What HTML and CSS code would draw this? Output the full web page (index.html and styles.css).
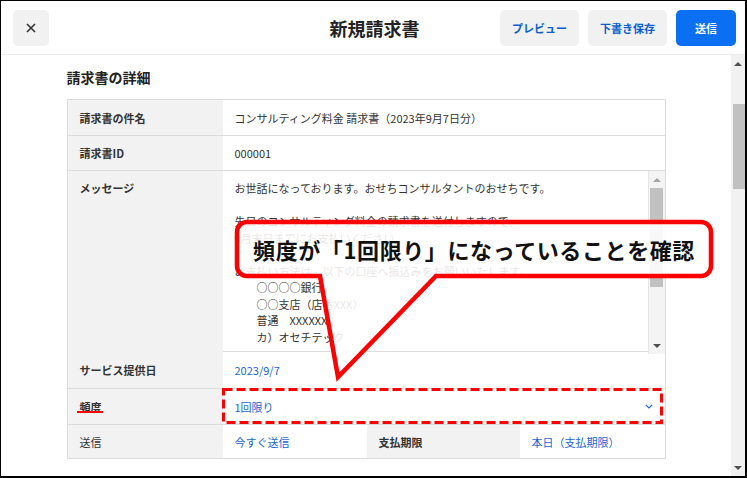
FILE: index.html
```html
<!DOCTYPE html>
<html lang="ja">
<head>
<meta charset="utf-8">
<title>新規請求書</title>
<link rel="stylesheet" href="styles.css">
</head>
<body>
<div class="frame">
  <header class="topbar">
    <div class="left">
      <button class="close" aria-label="閉じる">
        <svg width="10" height="10" viewBox="0 0 10 10"><path d="M1 1 L9 9 M9 1 L1 9" stroke="#333" stroke-width="1.6" fill="none"/></svg>
      </button>
    </div>
    <h1 class="title">新規請求書</h1>
    <div class="actions">
      <button class="btn ghost">プレビュー</button>
      <button class="btn ghost">下書き保存</button>
      <button class="btn primary">送信</button>
    </div>
  </header>
  <div class="main">
    <main class="content">
      <h2 class="section-title">請求書の詳細</h2>
      <div class="table">
        <div class="row r1">
          <div class="label">請求書の件名</div>
          <div class="value">コンサルティング料金 請求書（2023年9月7日分）</div>
        </div>
        <div class="row r2">
          <div class="label">請求書ID</div>
          <div class="value">000001</div>
        </div>
        <div class="row r3">
          <div class="label top">メッセージ</div>
          <div class="value message">
            <div class="msg-text">お世話になっております。おせちコンサルタントのおせちです。

先日のコンサルティング料金の請求書を送付しますので、
9月末日までにお支払いください。

お支払い方法は、以下の口座へ振込みをお願いいたします。
　　○○○○銀行
　　○○支店（店番XXX）
　　普通　XXXXXXX
　　カ）オセチテック</div>
            <div class="msg-scroll">
              <span class="sb-btn"><span class="tri up light"></span></span>
              <span class="sb-thumb"></span>
              <span class="sb-fill"></span>
              <span class="sb-btn"><span class="tri down"></span></span>
            </div>
          </div>
        </div>
        <div class="row r4">
          <div class="label">サービス提供日</div>
          <div class="value link">2023/9/7</div>
        </div>
        <div class="row r5">
          <div class="label">頻度</div>
          <div class="value link between">
            <span>1回限り</span>
            <svg class="chev" width="8" height="5" viewBox="0 0 8 5"><path d="M0.8 0.8 L4 4 L7.2 0.8" stroke="#1a66d2" stroke-width="1.2" fill="none"/></svg>
          </div>
        </div>
        <div class="row r6">
          <div class="label normal">送信</div>
          <div class="value link">今すぐ送信</div>
          <div class="label">支払期限</div>
          <div class="value link">本日（支払期限）</div>
        </div>
      </div>
    </main>
    <div class="page-scroll">
      <span class="sb-btn"><span class="tri up"></span></span>
      <span class="page-thumb"></span>
      <span class="sb-fill"></span>
      <span class="sb-btn"><span class="tri down"></span></span>
    </div>
  </div>
  <div class="annot">
    <svg width="747" height="478" viewBox="0 0 747 478">
      <path d="M247 222 H701 A10 10 0 0 1 711 232 V266 A10 10 0 0 1 701 276 H436 L338 377 L320 276 H247 A10 10 0 0 1 237 266 V232 A10 10 0 0 1 247 222 Z" fill="rgba(255,255,255,0.88)" stroke="#ff0000" stroke-width="4.5" stroke-linejoin="miter"/>
      <rect x="223.5" y="389.5" width="438" height="33" fill="none" stroke="#ff0000" stroke-width="3" stroke-dasharray="9 4"/>
      <line x1="77" y1="412" x2="103" y2="412" stroke="#ff0000" stroke-width="2"/>
    </svg>
    <div class="callout-text">頻度が「1回限り」になっていることを確認</div>
  </div>
</div>
</body>
</html>
```
FILE: styles.css
```css
* {
  box-sizing: border-box;
  margin: 0;
  padding: 0;
}

html,
body {
  width: 747px;
  height: 478px;
  overflow: hidden;
  background: #fff;
}

body {
  font-family: "Noto Sans CJK JP", "Noto Sans", sans-serif;
  color: #333;
}

.frame {
  position: relative;
  width: 747px;
  height: 478px;
  border-style: solid;
  border-color: #000;
  border-width: 1px 2px 2px 1px;
  display: flex;
  flex-direction: column;
}

/* header */
.topbar {
  height: 54px;
  flex: none;
  border-bottom: 1px solid #ececec;
  display: grid;
  grid-template-columns: 1fr auto 1fr;
  align-items: center;
  padding: 0 9px 0 12px;
}

.close {
  width: 36px;
  height: 36px;
  border: 0;
  border-radius: 5px;
  background: #f1f1f1;
  display: flex;
  align-items: center;
  justify-content: center;
}

.title {
  font-size: 18px;
  line-height: 24px;
  font-weight: 700;
  color: #222;
}

.actions {
  display: flex;
  justify-content: flex-end;
  gap: 9px;
}

.btn {
  height: 36px;
  border: 0;
  border-radius: 5px;
  font-family: "Noto Sans CJK JP", "Noto Sans", sans-serif;
  font-size: 11px;
  font-weight: 700;
}

.btn.ghost {
  width: 79px;
  background: #f1f1f1;
  color: #0a5fd0;
}

.btn.primary {
  width: 60px;
  background: #0a6ff2;
  color: #fff;
}

/* main */
.main {
  flex: 1;
  display: flex;
  min-height: 0;
}

.content {
  flex: 1;
  overflow: hidden;
  padding-top: 12px;
}

.section-title {
  width: 599px;
  margin: 0 auto;
  font-size: 14px;
  line-height: 20px;
  font-weight: 700;
  color: #222;
}

.table {
  width: 599px;
  margin: 12px auto 0;
  border: 1px solid #dcdcdc;
}

.row {
  display: grid;
  grid-template-columns: 155px 1fr;
  border-bottom: 1px solid #dcdcdc;
  font-size: 11px;
}

.row:last-child {
  border-bottom: 0;
}

.r1 { height: 36px; }
.r2 { height: 35px; }
.r3 { height: 181px; }
.r4 { height: 37px; }
.r5 { height: 36px; }
.r6 {
  height: 33px;
  grid-template-columns: 155px 144px 153px 1fr;
}

.label {
  background: #f2f2f2;
  padding-left: 12px;
  font-weight: 700;
  color: #333;
  display: flex;
  align-items: center;
}

.label.top {
  align-items: flex-start;
  padding-top: 9px;
  line-height: 16.5px;
}

.label.normal {
  font-weight: 400;
}

.value {
  padding-left: 12px;
  display: flex;
  align-items: center;
  color: #333;
}

.value.link {
  color: #1a66d2;
}

.value.between {
  justify-content: space-between;
  padding-right: 12px;
}

.value.message {
  padding: 0;
  align-items: stretch;
}

.msg-text {
  flex: 1;
  padding: 9px 12px;
  line-height: 16.5px;
  white-space: pre;
  overflow: hidden;
}

.msg-scroll {
  width: 17px;
  flex: none;
  background: #f4f4f4;
  border-left: 1px solid #e6e6e6;
  display: flex;
  flex-direction: column;
}

.sb-btn {
  height: 17px;
  flex: none;
  display: flex;
  align-items: center;
  justify-content: center;
}

.sb-fill {
  flex: 1;
}

.sb-thumb {
  height: 99px;
  margin: 0 2px 0 1px;
  background: #c1c1c1;
}

.tri {
  width: 0;
  height: 0;
  border-left: 4px solid transparent;
  border-right: 4px solid transparent;
}

.tri.up {
  border-bottom: 4px solid #505050;
}

.tri.up.light {
  border-bottom-color: #a3a3a3;
}

.tri.down {
  border-top: 4px solid #505050;
}

.page-scroll {
  width: 14px;
  flex: none;
  background: #f1f1f1;
  display: flex;
  flex-direction: column;
}

.page-thumb {
  height: 85px;
  margin: 32px 0 0 2px;
  background: #c1c1c1;
}

/* annotation overlay */
.annot {
  position: absolute;
  left: -1px;
  top: -1px;
  width: 747px;
  height: 478px;
  pointer-events: none;
}

.annot svg {
  position: absolute;
  left: 0;
  top: 0;
}

.callout-text {
  position: absolute;
  left: 237px;
  top: 222px;
  width: 474px;
  height: 54px;
  display: flex;
  align-items: center;
  justify-content: center;
  font-size: 22px;
  font-weight: 700;
  letter-spacing: 0.6px;
  color: #111;
}
```
